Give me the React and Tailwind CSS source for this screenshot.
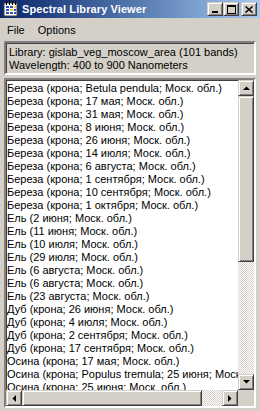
import React from "react";

const items = [
  "Береза (крона; Betula pendula; Моск. обл.)",
  "Береза (крона; 17 мая; Моск. обл.)",
  "Береза (крона; 31 мая; Моск. обл.)",
  "Береза (крона; 8 июня; Моск. обл.)",
  "Береза (крона; 26 июня; Моск. обл.)",
  "Береза (крона; 14 июля; Моск. обл.)",
  "Береза (крона; 6 августа; Моск. обл.)",
  "Береза (крона; 1 сентября; Моск. обл.)",
  "Береза (крона; 10 сентября; Моск. обл.)",
  "Береза (крона; 1 октября; Моск. обл.)",
  "Ель (2 июня; Моск. обл.)",
  "Ель (11 июня; Моск. обл.)",
  "Ель (10 июля; Моск. обл.)",
  "Ель (29 июля; Моск. обл.)",
  "Ель (6 августа; Моск. обл.)",
  "Ель (6 августа; Моск. обл.)",
  "Ель (23 августа; Моск. обл.)",
  "Дуб (крона; 26 июня; Моск. обл.)",
  "Дуб (крона; 4 июля; Моск. обл.)",
  "Дуб (крона; 2 сентября; Моск. обл.)",
  "Дуб (крона; 17 сентября; Моск. обл.)",
  "Осина (крона; 17 мая; Моск. обл.)",
  "Осина (крона; Populus tremula; 25 июня; Моск. обл.)",
  "Осина (крона; 25 июня; Моск. обл.)",
];

// raised 3D bevel, win2k style
const raised =
  "bg-[#d4d0c8] border border-t-[#d4d0c8] border-l-[#d4d0c8] border-b-[#404040] border-r-[#404040] shadow-[inset_1px_1px_#ffffff,inset_-1px_-1px_#808080]";
const sunken =
  "border-2 border-t-[#808080] border-l-[#808080] border-b-white border-r-white shadow-[inset_1px_1px_#404040,inset_-1px_-1px_#d4d0c8]";
const track =
  "bg-[repeating-conic-gradient(#ffffff_0_25%,#d4d0c8_0_50%)] bg-[length:2px_2px]";

const Arrow = ({ dir }) => {
  const pts = {
    up: "0,4 7,4 3.5,0.5",
    down: "0,0 7,0 3.5,3.5",
    left: "4,0 4,7 0.5,3.5",
    right: "0,0 0,7 3.5,3.5",
  }[dir];
  const vertical = dir === "up" || dir === "down";
  return (
    <svg width={vertical ? 7 : 4} height={vertical ? 4 : 7} viewBox={vertical ? "0 0 7 4" : "0 0 4 7"}>
      <polygon points={pts} fill="#000" />
    </svg>
  );
};

const AppIcon = () => (
  <svg width="16" height="16" viewBox="0 0 16 16">
    <rect x="1" y="2" width="13" height="13" fill="#ffffff" stroke="#404040" strokeWidth="1" />
    <rect x="3" y="5" width="3" height="2" fill="#3050c0" />
    <rect x="7" y="5" width="3" height="2" fill="#3050c0" />
    <rect x="3" y="8" width="3" height="2" fill="#3050c0" />
    <rect x="7" y="8" width="3" height="2" fill="#f0d030" />
    <rect x="11" y="8" width="2" height="2" fill="#3050c0" />
    <rect x="3" y="11" width="3" height="2" fill="#3050c0" />
    <rect x="7" y="11" width="3" height="2" fill="#3050c0" />
    <rect x="11" y="5" width="2" height="2" fill="#f0d030" />
    <rect x="11" y="11" width="2" height="2" fill="#3050c0" />
    {[3, 6, 9, 12].map((x) => (
      <rect key={x} x={x} y="0" width="1" height="4" fill="#000" />
    ))}
  </svg>
);

const CaptionButton = ({ children, className = "" }) => (
  <div className={`w-[16px] h-[14px] flex items-center justify-center ${raised} ${className}`}>
    {children}
  </div>
);

export default function App() {
  return (
    <div className="w-[260px] h-[411px] bg-[#d4d0c8] flex flex-col text-black font-['Liberation_Sans',Arial,sans-serif] text-[11px] overflow-hidden">
      {/* Title bar */}
      <div className="h-[18px] shrink-0 flex items-center bg-gradient-to-r from-[#0a246a] to-[#a6caf0] pl-[3px] pr-[3px]">
        <AppIcon />
        <span className="ml-[3px] text-white font-bold text-[11px] leading-none tracking-[0.1px]">
          Spectral Library Viewer
        </span>
        <div className="ml-auto flex items-center">
          <CaptionButton>
            <svg width="8" height="8" viewBox="0 0 8 8">
              <rect x="1" y="6" width="6" height="2" fill="#000" />
            </svg>
          </CaptionButton>
          <CaptionButton>
            <svg width="9" height="9" viewBox="0 0 9 9">
              <rect x="0.5" y="0.5" width="8" height="8" fill="none" stroke="#000" />
              <rect x="0" y="0" width="9" height="2" fill="#000" />
            </svg>
          </CaptionButton>
          <CaptionButton className="ml-[2px]">
            <svg width="8" height="7" viewBox="0 0 8 7">
              <path d="M0.5 0.5 L7.5 6.5 M7.5 0.5 L0.5 6.5" stroke="#000" strokeWidth="1.5" />
            </svg>
          </CaptionButton>
        </div>
      </div>

      {/* Menu bar */}
      <div className="h-[23px] shrink-0 flex items-center gap-[13px] pl-[7px] pt-[1px] text-[11px]">
        <span>File</span>
        <span>Options</span>
      </div>

      {/* Library info */}
      <div className={`mx-[4px] h-[34px] shrink-0 ${sunken} pl-[3px] pt-[3px] leading-[13px]`}>
        <div>Library: gislab_veg_moscow_area (101 bands)</div>
        <div>Wavelength: 400 to 900 Nanometers</div>
      </div>

      {/* List box */}
      <div className={`mx-[4px] mt-[3px] mb-[3px] flex-1 min-h-0 ${sunken} bg-white grid grid-cols-[1fr_16px] grid-rows-[1fr_16px]`}>
        <div className="overflow-hidden pt-[2px] pl-[1px] leading-[13px] whitespace-nowrap">
          {items.map((t, i) => (
            <div key={i} className="h-[13px]">
              {t}
            </div>
          ))}
        </div>

        {/* vertical scrollbar */}
        <div className="flex flex-col">
          <div className={`h-[16px] shrink-0 flex items-center justify-center ${raised}`}>
            <Arrow dir="up" />
          </div>
          <div className={`h-[166px] shrink-0 ${raised}`} />
          <div className={`flex-1 ${track}`} />
          <div className={`h-[16px] shrink-0 flex items-center justify-center ${raised}`}>
            <Arrow dir="down" />
          </div>
        </div>

        {/* horizontal scrollbar */}
        <div className="flex">
          <div className={`w-[16px] shrink-0 flex items-center justify-center ${raised}`}>
            <Arrow dir="left" />
          </div>
          <div className={`w-[180px] shrink-0 ${raised}`} />
          <div className={`flex-1 ${track}`} />
          <div className={`w-[16px] shrink-0 flex items-center justify-center ${raised}`}>
            <Arrow dir="right" />
          </div>
        </div>
        <div className="bg-[#d4d0c8]" />
      </div>
    </div>
  );
}
